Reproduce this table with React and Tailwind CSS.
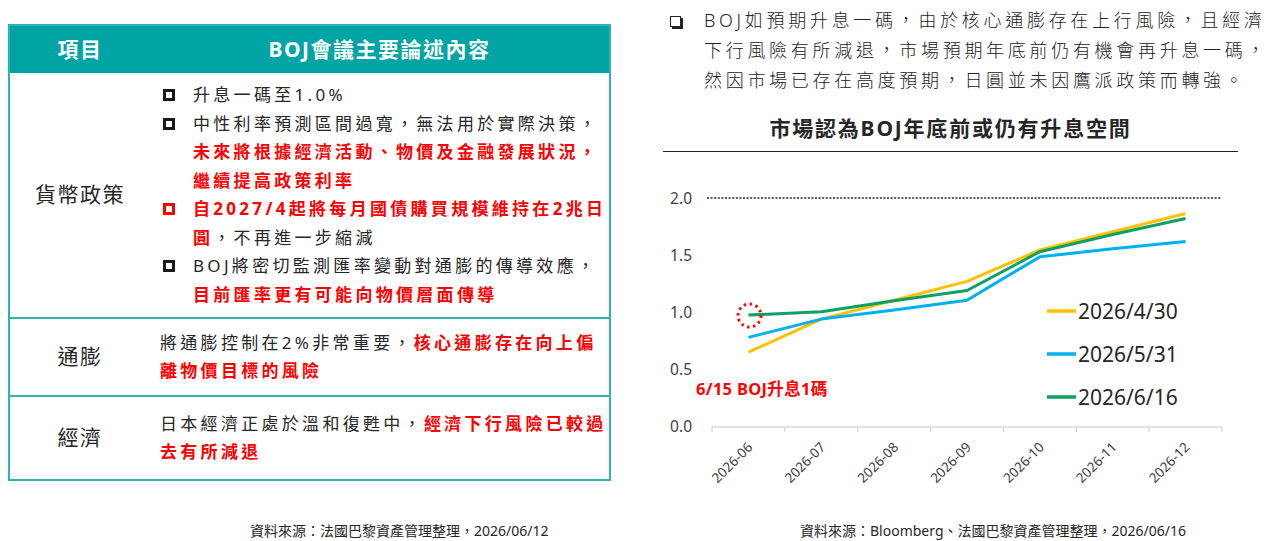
import React from "react";

const Y = (v) => 426.5 - 114.25 * v;
const CW = 72.857;
const X0 = 712;
const CX = (i) => X0 + (i + 0.5) * CW;

const series = [
  { color: "#FFC000", label: "2026/4/30", data: [0.65, 0.94, 1.105, 1.27, 1.545, 1.705, 1.865] },
  { color: "#00B0F0", label: "2026/5/31", data: [0.78, 0.94, 1.02, 1.105, 1.485, 1.555, 1.62] },
  { color: "#0E9F62", label: "2026/6/16", data: [0.975, 1.005, 1.1, 1.19, 1.53, 1.68, 1.82] },
];
const cats = ["2026-06", "2026-07", "2026-08", "2026-09", "2026-10", "2026-11", "2026-12"];

function Chart() {
  return (
    <svg width="615" height="340" viewBox="663 152 615 340" className="block">
      {[2, 1.5, 1, 0.5, 0].map((v) => (
        <text key={v} x="692" y={Y(v) + 5.5} textAnchor="end" fontSize="15.5" fill="#404040">
          {v.toFixed(1)}
        </text>
      ))}
      <line x1="707" y1={Y(2)} x2="1221" y2={Y(2)} stroke="#222" strokeWidth="1.4" strokeDasharray="2 1.6" />
      <line x1={X0} y1="427" x2={X0 + 7 * CW} y2="427" stroke="#d9d9d9" strokeWidth="1.4" />
      {Array.from({ length: 8 }).map((_, i) => (
        <line key={i} x1={X0 + i * CW} y1="427" x2={X0 + i * CW} y2="432" stroke="#d9d9d9" strokeWidth="1.4" />
      ))}
      {cats.map((c, i) => (
        <text
          key={c}
          x={CX(i) + 5}
          y="448"
          textAnchor="end"
          fontSize="13.5"
          fill="#404040"
          transform={`rotate(-45 ${CX(i) + 5} 448)`}
        >
          {c}
        </text>
      ))}
      {series.map((s) => (
        <polyline
          key={s.label}
          points={s.data.map((v, i) => `${CX(i)},${Y(v)}`).join(" ")}
          fill="none"
          stroke={s.color}
          strokeWidth="3"
          strokeLinejoin="round"
        />
      ))}
      <circle cx="749.5" cy="315.5" r="11.5" fill="none" stroke="#ff0000" strokeWidth="3" strokeDasharray="2.4 3.6" />
      <text x="696" y="395" fontSize="16.5" fontWeight="700" fill="#ff0000" letterSpacing="0.3">
        6/15 BOJ升息1碼
      </text>
      {series.map((s, i) => {
        const y = 311 + i * 43;
        return (
          <g key={s.label}>
            <line x1="1047" y1={y} x2="1076" y2={y} stroke={s.color} strokeWidth="3.5" />
            <text x="1078" y={y + 7.5} fontSize="21" fill="#262626">
              {s.label}
            </text>
          </g>
        );
      })}
    </svg>
  );
}

function Sq({ red }) {
  return (
    <div className="h-[28.5px] w-[33px] shrink-0 flex items-center">
      <div className={red ? "ml-[3px] w-[12px] h-[12px] border-[3px] border-[#ff0000]" : "ml-[3px] w-[12px] h-[12px] border-[3px] border-[#1a1a1a]"} />
    </div>
  );
}

function Seg({ parts }) {
  return (
    <div className="whitespace-nowrap h-[28.5px] leading-[28.5px]">
      {parts.map((p, i) =>
        p.r ? (
          <span key={i} className="text-[#ff0000] font-bold">
            {p.t}
          </span>
        ) : (
          <span key={i}>{p.t}</span>
        )
      )}
    </div>
  );
}

const items = [
  { lines: [[{ t: "升息一碼至1.0%" }]] },
  {
    lines: [
      [{ t: "中性利率預測區間過寬，無法用於實際決策，" }],
      [{ t: "未來將根據經濟活動、物價及金融發展狀況，", r: true }],
      [{ t: "繼續提高政策利率", r: true }],
    ],
  },
  {
    red: true,
    lines: [
      [{ t: "自2027/4起將每月國債購買規模維持在2兆日", r: true }],
      [{ t: "圓", r: true }, { t: "，不再進一步縮減" }],
    ],
  },
  {
    lines: [
      [{ t: "BOJ將密切監測匯率變動對通膨的傳導效應，" }],
      [{ t: "目前匯率更有可能向物價層面傳導", r: true }],
    ],
  },
];

function Table() {
  return (
    <div className="ml-[8px] mt-[24px] w-[603px] border-2 border-[#2db4b2] text-[#262626]">
      <div className="h-[47px] bg-[#00a4a4] grid grid-cols-[140px_1fr] items-center text-white font-bold text-[21px] tracking-[1.5px]">
        <div className="text-center">項目</div>
        <div className="text-center">BOJ會議主要論述內容</div>
      </div>
      <div className="h-[244px] grid grid-cols-[140px_1fr]">
        <div className="flex items-center justify-center text-[21px] tracking-[1.5px]">貨幣政策</div>
        <div className="flex flex-col justify-center pl-[10px] text-[17px] tracking-[3.3px]">
          {items.map((it, i) => (
            <div key={i} className="flex">
              <Sq red={it.red} />
              <div>
                {it.lines.map((l, j) => (
                  <Seg key={j} parts={l} />
                ))}
              </div>
            </div>
          ))}
        </div>
      </div>
      <div className="h-[78px] border-t-2 border-[#2db4b2] grid grid-cols-[140px_1fr]">
        <div className="flex items-center justify-center text-[21px] tracking-[1.5px]">通膨</div>
        <div className="flex flex-col justify-center pl-[10px] text-[17px] tracking-[3.3px]">
          <Seg parts={[{ t: "將通膨控制在2%非常重要，" }, { t: "核心通膨存在向上偏", r: true }]} />
          <Seg parts={[{ t: "離物價目標的風險", r: true }]} />
        </div>
      </div>
      <div className="h-[84px] border-t-2 border-[#2db4b2] grid grid-cols-[140px_1fr]">
        <div className="flex items-center justify-center text-[21px] tracking-[1.5px]">經濟</div>
        <div className="flex flex-col justify-center pl-[10px] text-[17px] tracking-[3.3px]">
          <Seg parts={[{ t: "日本經濟正處於溫和復甦中，" }, { t: "經濟下行風險已較過", r: true }]} />
          <Seg parts={[{ t: "去有所減退", r: true }]} />
        </div>
      </div>
    </div>
  );
}

export default function App() {
  return (
    <div className="w-[1278px] h-[541px] bg-white flex overflow-hidden font-['Noto_Sans','Noto_Sans_CJK_TC',sans-serif] text-[#262626]">
      <div className="w-[640px] shrink-0 flex flex-col">
        <Table />
        <div className="mt-auto h-[20px] leading-[20px] pl-[250px] text-[14px] text-[#262626] whitespace-nowrap">
          資料來源：法國巴黎資產管理整理，2026/06/12
        </div>
      </div>
      <div className="flex-1 flex flex-col pl-[23px]">
        <div className="mt-[5px] flex text-[18px] leading-[30px] tracking-[3.7px] font-light text-[#222222]">
          <div className="w-[41px] shrink-0 h-[30px] flex items-center">
            <div className="ml-[7px] mt-[2px] w-[11px] h-[11px] border-[1.5px] border-[#222] shadow-[2px_2px_0_#222]" />
          </div>
          <div className="whitespace-nowrap">
            <div>BOJ如預期升息一碼，由於核心通膨存在上行風險，且經濟</div>
            <div>下行風險有所減退，市場預期年底前仍有機會再升息一碼，</div>
            <div>然因市場已存在高度預期，日圓並未因鷹派政策而轉強。</div>
          </div>
        </div>
        <div className="mt-[18px] w-[575px] text-center text-[21px] leading-[30px] font-bold tracking-[1.8px] text-[#262626] whitespace-nowrap">
          市場認為BOJ年底前或仍有升息空間
        </div>
        <div className="mt-[8px] w-[575px] h-[1px] bg-[#222]" />
        <Chart />
        <div className="mt-auto h-[20px] leading-[20px] pl-[137px] text-[14px] text-[#262626] whitespace-nowrap">
          資料來源：Bloomberg、法國巴黎資產管理整理，2026/06/16
        </div>
      </div>
    </div>
  );
}
